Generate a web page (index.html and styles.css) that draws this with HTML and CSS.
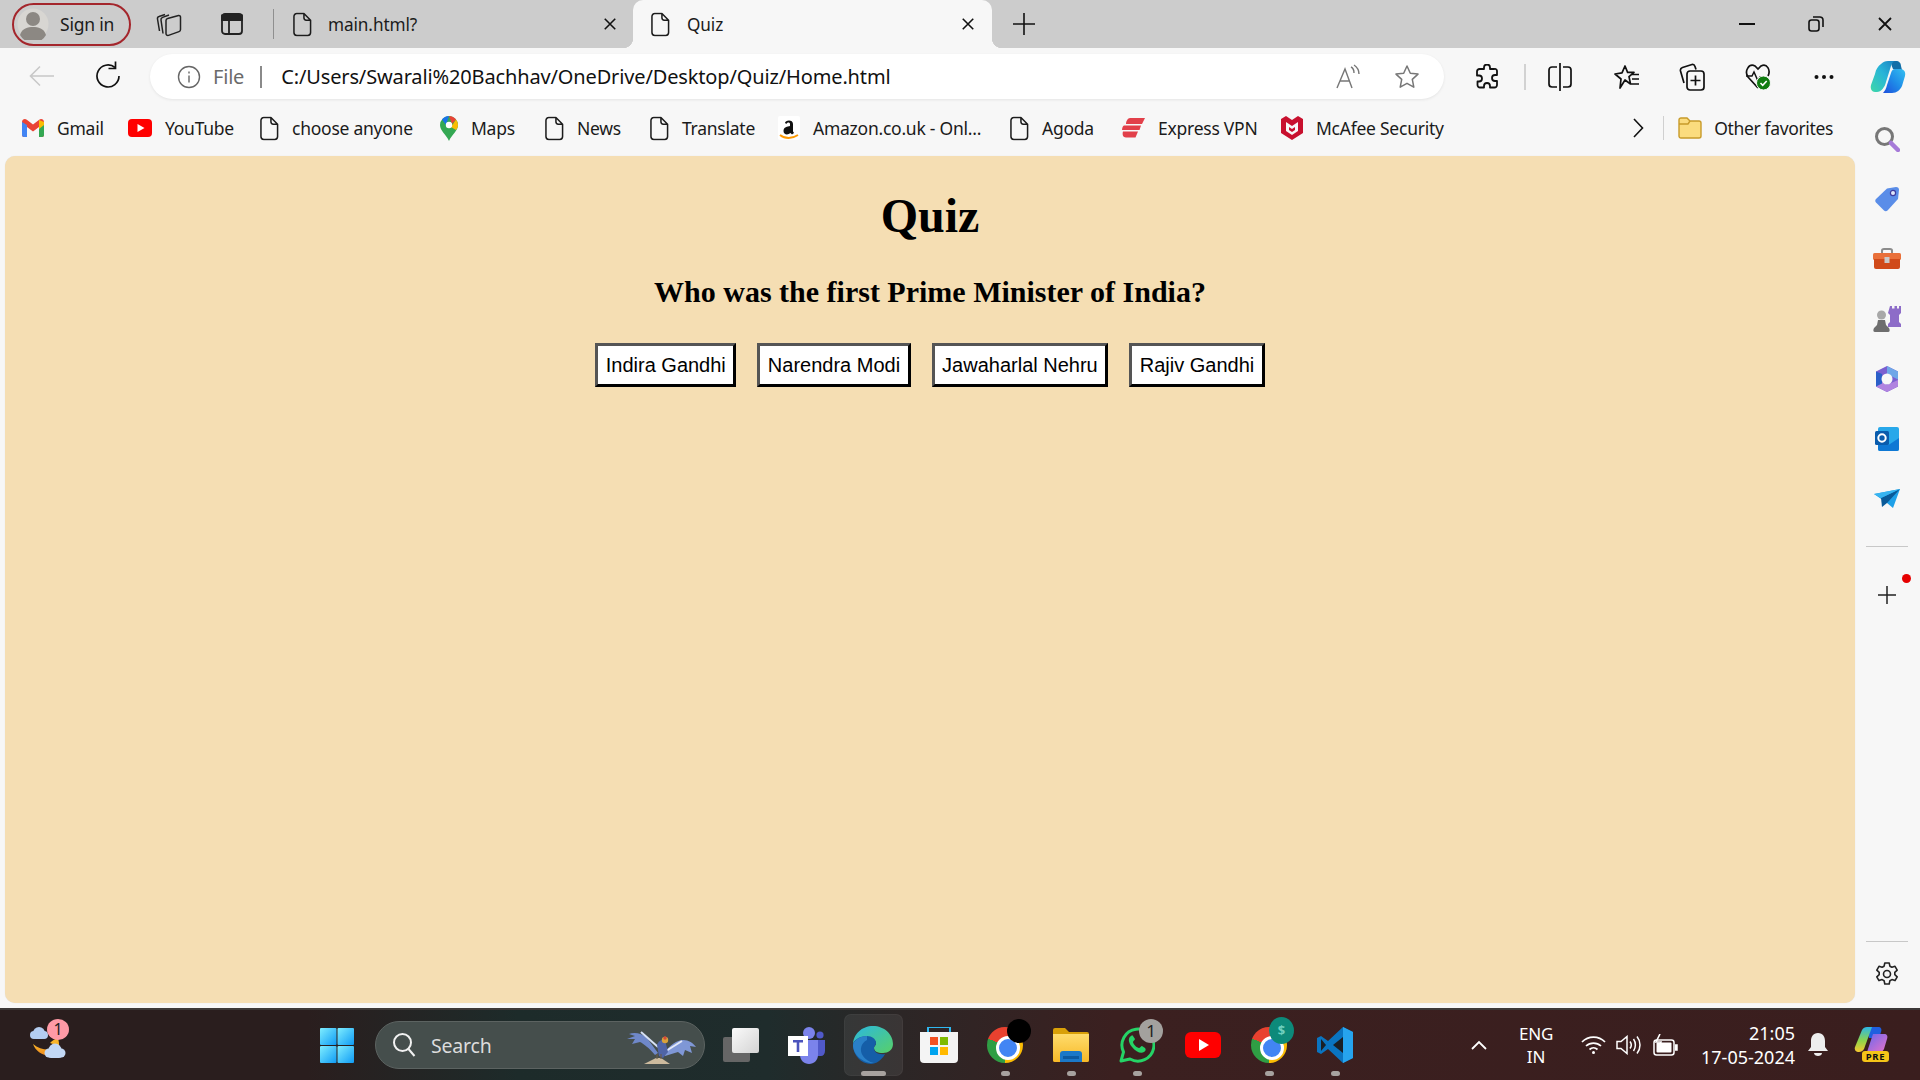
FILE: index.html
```html
<!DOCTYPE html>
<html lang="en">
<head>
<meta charset="utf-8">
<title>Quiz</title>
<link rel="stylesheet" href="styles.css">
</head>
<body>
<svg class="sprites" aria-hidden="true">
  <defs>
    <symbol id="file" viewBox="0 0 20 26"><path d="M4 1.500h7.500L18.500 8.500v13a3 3 0 0 1-3 3H4a3 3 0 0 1-3-3v-17a3 3 0 0 1 3-3zM11.500 1.500V6a2.500 2.500 0 0 0 2.500 2.500h4.500" fill="none" stroke="#1c1c1c" stroke-width="1.600" stroke-linejoin="round"/></symbol>
    <symbol id="x" viewBox="0 0 16 16"><path d="M2 2l12 12M14 2L2 14" stroke="#111" stroke-width="1.800" fill="none"/></symbol>
    <linearGradient id="copL" x1="0" y1="1" x2="1" y2="0"><stop offset="0" stop-color="#3ed8a8"/><stop offset=".55" stop-color="#27b4d8"/><stop offset="1" stop-color="#1a7fc0"/></linearGradient>
    <linearGradient id="copR" x1="0" y1="1" x2="1" y2="0"><stop offset="0" stop-color="#1f4fdc"/><stop offset=".5" stop-color="#1f8ce8"/><stop offset="1" stop-color="#35c0f0"/></linearGradient>
    <linearGradient id="edge" x1="0" y1="0" x2="1" y2="1"><stop offset="0" stop-color="#2bb8e0"/><stop offset="1" stop-color="#58d068"/></linearGradient>
    <linearGradient id="win" x1="0" y1="0" x2="1" y2="1"><stop offset="0" stop-color="#7feeff"/><stop offset="1" stop-color="#0f9bf5"/></linearGradient>
    <linearGradient id="folder" x1="0" y1="0" x2="0" y2="1"><stop offset="0" stop-color="#ffdc6c"/><stop offset="1" stop-color="#f7b928"/></linearGradient>
    <linearGradient id="preL" x1="0" y1="0" x2="0" y2="1"><stop offset="0" stop-color="#2bb7e8"/><stop offset=".55" stop-color="#8fd44a"/><stop offset="1" stop-color="#f8c830"/></linearGradient>
    <linearGradient id="preR" x1="0" y1="0" x2="1" y2="1"><stop offset="0" stop-color="#6a68ee"/><stop offset="1" stop-color="#e872c8"/></linearGradient>
    <linearGradient id="card" x1="0" y1="0" x2="1" y2="1"><stop offset="0" stop-color="#fafafa"/><stop offset="1" stop-color="#d4d4d4"/></linearGradient>
    <linearGradient id="moon" x1="0" y1="0" x2="0" y2="1"><stop offset="0" stop-color="#f8b52a"/><stop offset="1" stop-color="#ee8a1e"/></linearGradient>
  </defs>
</svg>

<div class="browser">
  <header class="tabstrip">
    <div class="signin">
      <svg class="avatar" viewBox="0 0 32 32"><circle cx="16" cy="16" r="15.500" fill="#d8d6d2"/><circle cx="16" cy="11" r="7" fill="#8c8883"/><path d="M3 27c2-7 8-8 13-8s11 1 13 8a15 15 0 0 1-26 0z" fill="#8c8883"/></svg>
      <span>Sign in</span>
    </div>
    <span class="strip-btn first">
      <svg width="26" height="26" viewBox="0 0 26 26" fill="none" stroke="#222" stroke-width="1.500" stroke-linejoin="round"><path d="M3.500 20L1.500 8c-.2-1.200.4-2.200 1.500-2.500L9 3.500M7 22.500L5 9c-.2-1.200.5-2.200 1.600-2.600L13 4M10 21.500V9.500c0-1 .6-1.800 1.600-2l11-3c1-.2 1.900.5 1.900 1.500v12.500c0 1-.6 1.800-1.500 2.100l-10.500 3.800c-1.300.4-2.500-.4-2.500-1.900z"/></svg>
    </span>
    <span class="strip-btn">
      <svg width="24" height="24" viewBox="0 0 24 24" fill="none" stroke="#222" stroke-width="1.800"><rect x="2" y="2" width="20" height="20" rx="3"/><path d="M2 3.500h20V8H2zM9 8v14" fill="#222"/></svg>
    </span>
    <i class="strip-sep"></i>
    <div class="tab">
      <svg class="ficon" viewBox="0 0 20 26"><use href="#file"/></svg>
      <span class="tab-label">main.html?</span>
      <svg class="tabx" viewBox="0 0 16 16"><use href="#x"/></svg>
    </div>
    <div class="tab active">
      <svg class="ficon" viewBox="0 0 20 26"><use href="#file"/></svg>
      <span class="tab-label">Quiz</span>
      <svg class="tabx" viewBox="0 0 16 16"><use href="#x"/></svg>
    </div>
    <svg class="newtab" width="22" height="22" viewBox="0 0 22 22"><path d="M11 0v22M0 11h22" stroke="#111" stroke-width="1.600"/></svg>
    <div class="winctl">
      <svg width="16" height="16" viewBox="0 0 16 16"><path d="M0 8h16" stroke="#111" stroke-width="2"/></svg>
      <svg width="16" height="16" viewBox="0 0 16 16" fill="none" stroke="#111" stroke-width="1.600"><rect x="1" y="4" width="10" height="11" rx="2.500"/><path d="M5 1h6.500A3 3 0 0 1 15 4v7"/></svg>
      <svg width="16" height="16" viewBox="0 0 16 16"><use href="#x"/></svg>
    </div>
  </header>

  <nav class="toolbar">
    <svg class="tool-back" width="26" height="22" viewBox="0 0 26 22" fill="none" stroke="#c8c8c8" stroke-width="1.600"><path d="M25 11H2M11 1.500L1.500 11l9.500 9.500"/></svg>
    <svg class="tool-reload" width="26" height="28" viewBox="0 0 26 28" fill="none" stroke="#111" stroke-width="1.700"><path d="M20 6.500A11 11 0 1 0 24 15"/><path d="M20.500 0.500v7h-7"/></svg>
    <div class="address">
      <svg width="24" height="24" viewBox="0 0 24 24" fill="none" stroke="#666" stroke-width="1.400"><circle cx="12" cy="12" r="10.500"/><path d="M12 10.500v7M12 6.500v2"/></svg>
      <span class="scheme">File</span>
      <i class="addr-sep"></i>
      <span class="url">C:/Users/Swarali%20Bachhav/OneDrive/Desktop/Quiz/Home.html</span>
      <svg class="readaloud" width="26" height="26" viewBox="0 0 26 26" fill="none" stroke="#777" stroke-width="1.400"><path d="M1 24L9 5l7 19M4 17h10M15 3c2 1 3 3 3 6M18 1c3 2 5 5 5 9"/></svg>
      <svg width="26" height="26" viewBox="0 0 26 26" fill="none" stroke="#777" stroke-width="1.500" stroke-linejoin="round"><path d="M13 2l3.300 7.200 7.700.9-5.700 5.300 1.500 7.800L13 19.300l-6.800 3.900 1.500-7.800L2 10.100l7.700-.9z"/></svg>
    </div>
    <div class="tools">
      <svg class="t1" width="24" height="26" viewBox="0 0 24 26" fill="none" stroke="#111" stroke-width="1.800" stroke-linejoin="round"><path d="M9 3.500a3 3 0 0 1 6 0V5h4.500A2 2 0 0 1 22 7v4h-2a3 3 0 0 0 0 6h2v4a2.500 2.500 0 0 1-2.500 2.500H15v-1.500a3 3 0 0 0-6 0v1.500H5A2.500 2.500 0 0 1 2.500 21v-3.500H4a3 3 0 0 0 0-6H2V7.500A2.500 2.500 0 0 1 4.500 5H9z"/></svg>
      <i class="tool-sep"></i>
      <svg class="t2" width="24" height="28" viewBox="0 0 24 28" fill="none" stroke="#111" stroke-width="1.700"><path d="M9 4H4a3 3 0 0 0-3 3v14a3 3 0 0 0 3 3h5M15 4h5a3 3 0 0 1 3 3v14a3 3 0 0 1-3 3h-5M12 0v28"/></svg>
      <svg class="t3" width="26" height="26" viewBox="0 0 26 26" fill="none" stroke="#111" stroke-width="1.700" stroke-linejoin="round"><path d="M11 2l2.600 6.400H20l-5 4.200L16.500 20 11 16l-5 8 1-9-6-5 7-1.200zM18 10.500h7M18 15h7M17 20h8"/></svg>
      <svg class="t4" width="26" height="28" viewBox="0 0 26 28" fill="none" stroke="#111" stroke-width="1.700" stroke-linejoin="round"><path d="M5 20L1.500 8c-.3-1.500.5-3 2-3.500L13 1.500c1.500-.3 2.500.5 3 2l1 3"/><rect x="8" y="8" width="17" height="19" rx="3"/><path d="M16.500 12.500v10M11.500 17.500h10"/></svg>
      <svg class="t5" width="26" height="28" viewBox="0 0 26 28"><path d="M13 25L3 14C-1 8 4 0 10 3l3 3 3-3c6-3 10 4 7 10" fill="none" stroke="#111" stroke-width="1.700"/><path d="M1 13h6l2-4 4 9 2-4h3" fill="none" stroke="#111" stroke-width="1.500"/><circle cx="18.500" cy="20" r="7" fill="#107c10" stroke="#f7f7f7"/><path d="M15.500 20l2.200 2.300 4-4.300" fill="none" stroke="#fff" stroke-width="1.600"/></svg>
      <svg class="t6" width="20" height="6" viewBox="0 0 20 6" fill="#111"><circle cx="2.500" cy="3" r="2"/><circle cx="10" cy="3" r="2"/><circle cx="17.500" cy="3" r="2"/></svg>
      <svg class="t7" width="36" height="32" viewBox="0 0 36 32"><path d="M22 0h4c3 0 5 2 5 5l1 4-9-1c-2-4-2-6-1-8z" fill="#136fa8"/><path d="M11 3c2-2 4-3 7-3h8c-3 0-4 2-5 5l-5 16c-1 5-5 10-9 10H5c-3 0-5-3-4-7l4-11c1-5 3-8 6-10z" fill="url(#copL)"/><path d="M13 32h9c5 0 8-3 10-7l3-10c1-4-1-7-5-7h-5c-2 0-3 1-4 4l-4 12c-.7 3-2 6-4 8z" fill="url(#copR)"/></svg>
    </div>
  </nav>

  <div class="main">
    <div class="pagecol">
      <div class="favbar">
        <ul class="favlist">
          <li class="fav">
            <svg class="favico" width="22" height="18" viewBox="0 0 22 18"><path d="M0 3v13a2 2 0 0 0 2 2h3V8l6 4.500L17 8v10h3a2 2 0 0 0 2-2V3c0-2.500-2.800-3.800-4.800-2.300L11 5.500 4.800.7C2.800-.8 0 .5 0 3z" fill="#ea4335"/><path d="M0 3v13a2 2 0 0 0 2 2h3V6z" fill="#4285f4"/><path d="M22 3v13a2 2 0 0 1-2 2h-3V6z" fill="#34a853"/><path d="M17 1l5 2v3l-5 4z" fill="#fbbc04"/></svg>
            <span>Gmail</span>
          </li>
          <li class="fav">
            <svg class="favico" width="24" height="18" viewBox="0 0 24 18"><rect width="24" height="18" rx="4" fill="#f00"/><path d="M9.500 5l7 4-7 4z" fill="#fff"/></svg>
            <span>YouTube</span>
          </li>
          <li class="fav"><svg class="favico ficon" viewBox="0 0 20 26"><use href="#file"/></svg><span>choose anyone</span></li>
          <li class="fav">
            <svg class="favico" width="18" height="25" viewBox="0 0 18 25"><path d="M9 0a9 9 0 0 1 9 9c0 6-6 9-9 16-3-7-9-10-9-16a9 9 0 0 1 9-9z" fill="#34a853"/><path d="M2 3.500A9 9 0 0 1 9 0l-3 9z" fill="#1a73e8"/><path d="M9 0a9 9 0 0 1 7 3.500L12 8z" fill="#ea4335"/><path d="M16 3.500A9 9 0 0 1 18 9c0 2-1 4-2 5l-5-3z" fill="#fbbc04"/><circle cx="9" cy="9" r="3.200" fill="#fff"/></svg>
            <span>Maps</span>
          </li>
          <li class="fav"><svg class="favico ficon" viewBox="0 0 20 26"><use href="#file"/></svg><span>News</span></li>
          <li class="fav"><svg class="favico ficon" viewBox="0 0 20 26"><use href="#file"/></svg><span>Translate</span></li>
          <li class="fav">
            <svg class="favico" width="22" height="24" viewBox="0 0 22 24"><rect width="22" height="24" rx="2" fill="#fff"/><path d="M7 7c0-3 8-4 8 1v7c0 1 1 1.500 1 2l-2 1.500-1.500-1.500c-3 2.500-7 1.500-7-2 0-4 4-4.500 6.500-5V8c0-2-3-2-3.500 0z" fill="#111"/><path d="M2 19c5 4 12 4 18 0" stroke="#f90" stroke-width="1.800" fill="none"/></svg>
            <span>Amazon.co.uk - Onl...</span>
          </li>
          <li class="fav"><svg class="favico ficon" viewBox="0 0 20 26"><use href="#file"/></svg><span>Agoda</span></li>
          <li class="fav">
            <svg class="favico" width="24" height="20" viewBox="0 0 24 20" fill="#e2404a"><path d="M9 0h15l-3 6H5c0-3 2-6 4-6zM3 7.500h17l-1.500 4.500H1c0-2 1-4.500 2-4.500zM2 13.500h15l-2.500 6H5c-3 0-4-3-3-6z"/></svg>
            <span>Express VPN</span>
          </li>
          <li class="fav">
            <svg class="favico" width="22" height="24" viewBox="0 0 22 24"><path d="M0 3l5-3 6 4 6-4 5 3v14l-11 7L0 17z" fill="#c8102e"/><path d="M5 6l6 4 6-4v9l-6 4-6-4z" fill="#f7f7f7"/><path d="M8 11l3 2 3-2v3l-3 2-3-2z" fill="#c8102e"/></svg>
            <span>McAfee Security</span>
          </li>
        </ul>
        <svg class="fav-more" width="12" height="20" viewBox="0 0 12 20" fill="none" stroke="#111" stroke-width="1.600"><path d="M2 1l8.500 9L2 19"/></svg>
        <i class="fav-sep"></i>
        <div class="fav other">
          <svg class="favico" width="24" height="22" viewBox="0 0 24 22"><path d="M1 3a2 2 0 0 1 2-2h6l3 3h9a2 2 0 0 1 2 2v13a2 2 0 0 1-2 2H3a2 2 0 0 1-2-2z" fill="#fbdc7e" stroke="#c89b2a" stroke-width="1.400"/><path d="M1 7h9l2-3" fill="none" stroke="#c89b2a" stroke-width="1.400"/></svg>
          <span>Other favorites</span>
        </div>
      </div>

      <main class="page">
        <h1>Quiz</h1>
        <h2>Who was the first Prime Minister of India?</h2>
        <div class="options">
          <button type="button">Indira Gandhi</button>
          <button type="button">Narendra Modi</button>
          <button type="button">Jawaharlal Nehru</button>
          <button type="button">Rajiv Gandhi</button>
        </div>
      </main>
    </div>

    <aside class="sidebar">
      <div class="side-slot">
        <svg width="26" height="26" viewBox="0 0 26 26"><circle cx="10.500" cy="10.500" r="8" fill="none" stroke="#777" stroke-width="3"/><path d="M17 17l7 7" stroke="#a67ad8" stroke-width="4.500" stroke-linecap="round"/></svg>
      </div>
      <div class="side-slot">
        <svg width="26" height="26" viewBox="0 0 26 26"><path d="M13 2.500l9-1.500c2 0 3 1 3 3l-1 9-10.500 11.500c-1 1-2.500 1-3.500 0L2 16.500c-1-1-1-2.500 0-3.500z" fill="#5a8de8"/><circle cx="19" cy="7" r="2.600" fill="#dfe6fa" stroke="#3c3ca0" stroke-width="1.200"/></svg>
      </div>
      <div class="side-slot">
        <svg width="28" height="22" viewBox="0 0 28 22"><path d="M9 5V2.500C9 1.500 10 1 11 1h6c1 0 2 .5 2 1.500V5" fill="none" stroke="#8c8c8c" stroke-width="2"/><rect y="5" width="28" height="7" rx="1.500" fill="#e9703a"/><path d="M1 11h26v8a2 2 0 0 1-2 2H3a2 2 0 0 1-2-2z" fill="#d04a1a"/><rect x="11.500" y="9" width="5" height="6" fill="#c9c9c9"/></svg>
      </div>
      <div class="side-slot">
        <svg width="28" height="28" viewBox="0 0 28 28"><path d="M17 1h2v2.500h2.500V1H24v2.500h2V1h2v7l-2 2v7l2 2v3H15v-3l2-2v-7l-2-2z" fill="#8d6cc8"/><circle cx="8.500" cy="10" r="4.500" fill="#a8a8a8"/><path d="M5 15h7l1 5 3 3c1 2 1 4-1 4H2c-2 0-2-2-1-4l3-3z" fill="#6e6e6e"/></svg>
      </div>
      <div class="side-slot">
        <svg width="26" height="26" viewBox="0 0 26 26"><path d="M13 0l11 5.500v15L13 26 2 20.500v-15z" fill="#7a5fd0"/><path d="M13 0l11 5.500v8L13 8z" fill="#6fa7e8"/><path d="M2 12l11 7 11-5v6.500L13 26 2 20.500z" fill="#b083e0"/><path d="M2 5.500v15l6-3V8z" fill="#2a5fc8"/><circle cx="13" cy="13" r="5.500" fill="#f7f7f7"/></svg>
      </div>
      <div class="side-slot">
        <svg width="24" height="24" viewBox="0 0 24 24"><rect x="3" width="21" height="24" rx="2" fill="#28a8ea"/><path d="M3 13l10.500 5L24 11v11a2 2 0 0 1-2 2H5a2 2 0 0 1-2-2z" fill="#0f78d4"/><rect y="4" width="14" height="14" rx="1.500" fill="#0a5cad"/><circle cx="7" cy="11" r="3.700" fill="none" stroke="#fff" stroke-width="2"/></svg>
      </div>
      <div class="side-slot">
        <svg width="26" height="20" viewBox="0 0 26 20"><path d="M0 5l26-5-7 19-6-5z" fill="#1ea0e8"/><path d="M26 0L7 9l1 9 5-4z" fill="#0a5a98"/><path d="M26 0L7 9 0 5z" fill="#37b4f0"/></svg>
      </div>
      <i class="side-sep"></i>
      <div class="side-add">
        <svg width="18" height="18" viewBox="0 0 18 18"><path d="M9 0v18M0 9h18" stroke="#222" stroke-width="1.500"/></svg>
        <i class="reddot"></i>
      </div>
      <div class="side-bottom">
        <svg width="26" height="26" viewBox="0 0 26 26" fill="none" stroke="#222" stroke-width="1.600" stroke-linejoin="round"><path d="M10.800 2h4.400l.7 3.200 2 1.100 3.100-1 2.200 3.800-2.400 2.200v2.300l2.400 2.200-2.200 3.800-3.100-1-2 1.100-.7 3.300h-4.400l-.7-3.300-2-1.100-3.100 1-2.200-3.800 2.400-2.200v-2.300L2.800 9.100 5 5.300l3.100 1 2-1.100z"/><circle cx="13" cy="13" r="3.500"/></svg>
      </div>
    </aside>
  </div>
</div>

<footer class="taskbar">
  <div class="weather">
    <svg width="38" height="40" viewBox="0 0 38 40"><path d="M3 23c3 8 11 13 19 11 3-1 6-4 7-9-6 5-18 5-26-2z" fill="url(#moon)"/><path d="M20 22c3-3 6-5 8-4 1 2 1 4 1 7z" fill="#f8b52a"/><g fill="#b4cdf0"><circle cx="9" cy="12" r="6"/><circle cx="4" cy="14" r="4"/><circle cx="14" cy="14" r="4"/><rect x="3" y="12" width="12" height="6" rx="3"/></g><g fill="#c2d8f5"><circle cx="25" cy="29" r="6.500"/><circle cx="19" cy="32" r="4.500"/><circle cx="31" cy="32" r="4.500"/><rect x="18" y="30" width="14" height="7" rx="3"/></g></svg>
    <b class="wx-badge">1</b>
  </div>
  <div class="task-center">
    <div class="slot winlogo">
      <svg width="34" height="35" viewBox="0 0 34 35" fill="url(#win)"><rect width="16.500" height="17" rx="1"/><rect x="17.500" width="16.500" height="17" rx="1"/><rect y="18" width="16.500" height="17" rx="1"/><rect x="17.500" y="18" width="16.500" height="17" rx="1"/></svg>
    </div>
    <div class="search">
      <svg width="24" height="26" viewBox="0 0 24 26" fill="none" stroke="#f2f2f2" stroke-width="2"><circle cx="10.500" cy="10.500" r="8.500"/><path d="M16.500 17l6 7"/></svg>
      <span>Search</span>
      <svg class="condor" width="72" height="38" viewBox="0 0 72 38"><path d="M31 27L20 12C15 7 7 6 2 8l6 2-8 3 8 0-3 5 8-2c4 2 9 6 15 13z" fill="#6f88c9"/><path d="M14 6l17 15" stroke="#d7e1f5" stroke-width="2" fill="none"/><path d="M38 26c5-7 12-12 18-12 6 0 10 3 13 7l-6-1 2 7-7-3-2 6-5-4-13 4z" fill="#7f97d6"/><path d="M39 25l16-10" stroke="#e3e9f8" stroke-width="2" fill="none"/><path d="M30 19c1-4 5-6 8-5l3 12-5 6-4-2z" fill="#4f64a6"/><circle cx="38" cy="14" r="3.200" fill="#d9a23a"/><circle cx="38" cy="12" r="1.700" fill="#d64a3a"/><path d="M17 38l8-4 4-2h5l9 6z" fill="#cdbb9e"/><path d="M30 28v5M34 28v5" stroke="#6a5c4c" stroke-width="1.200"/></svg>
    </div>
    <div class="slot">
      <svg width="36" height="34" viewBox="0 0 36 34"><rect y="9" width="27" height="25" rx="2" fill="#666"/><rect x="9" width="27" height="25" rx="2" fill="url(#card)"/></svg>
    </div>
    <div class="slot">
      <svg width="38" height="38" viewBox="0 0 38 38"><circle cx="21" cy="7" r="6" fill="#7b83eb"/><circle cx="32" cy="9" r="3.600" fill="#5059c9"/><path d="M27 14h10v11c0 3-2 5-4 5h-6z" fill="#5059c9"/><path d="M12 14h18v15c0 5-4 9-9 9s-9-4-9-9z" fill="#7b83eb"/><rect y="10" width="20" height="20" fill="#fff"/><path d="M5 14h10v2.400h-3.700V26H8.700v-9.600H5z" fill="#4b53bc"/></svg>
    </div>
    <div class="slot current">
      <svg width="40" height="38" viewBox="0 0 40 38"><path d="M0 19C0 8 9 0 20 0c11 0 20 8 20 18 0 6-5 9-10 9-6 0-9-2-9-5 0-2 2-2 2-5s-4-5-8-5C7 12 0 14 0 19z" fill="url(#edge)"/><path d="M0 19c0-5 7-9 14-9 5 0 9 3 9 7 0 2-2 3-2 5 0 4 4 7 11 6-3 6-9 10-14 10C8 38 0 29 0 19z" fill="#155ea8"/><path d="M14 14c-6 3-8 10-4 16 2 3 6 6 11 7C12 38 0 30 0 19c0-4 7-9 14-9z" fill="#2a80c8"/></svg>
      <i class="run wide"></i>
    </div>
    <div class="slot">
      <svg width="38" height="36" viewBox="0 0 38 36"><rect x="8" y="0" width="22" height="9" fill="none" stroke="#30b8f0" stroke-width="2"/><path d="M0 5h38v27a4 4 0 0 1-4 4H4a4 4 0 0 1-4-4z" fill="#f4f4f4"/><rect x="10" y="10" width="8" height="8" fill="#f25022"/><rect x="20" y="10" width="8" height="8" fill="#7fba00"/><rect x="10" y="20" width="8" height="8" fill="#00a4ef"/><rect x="20" y="20" width="8" height="8" fill="#ffb900"/></svg>
    </div>
    <div class="slot">
      <div class="chrome"></div>
      <i class="blackdot"></i>
      <i class="run"></i>
    </div>
    <div class="slot">
      <svg width="36" height="34" viewBox="0 0 36 34"><path d="M0 2a2 2 0 0 1 2-2h10l4 4h18a2 2 0 0 1 2 2v26a2 2 0 0 1-2 2H2a2 2 0 0 1-2-2z" fill="#d9a008"/><path d="M0 6h36v26a2 2 0 0 1-2 2H2a2 2 0 0 1-2-2z" fill="url(#folder)"/><path d="M7 34V26a3 3 0 0 1 3-3h16a3 3 0 0 1 3 3v8z" fill="#1b78c8"/><rect x="10" y="28" width="16" height="3" fill="#0d5aa0"/></svg>
      <i class="run"></i>
    </div>
    <div class="slot">
      <svg width="36" height="36" viewBox="0 0 36 36"><path d="M2 34l2.500-9A16 16 0 1 1 11 32z" fill="none" stroke="#25d366" stroke-width="3" stroke-linejoin="round"/><path d="M12 9c-3 2-3 6 1 11s9 7 12 5c2-1 2-3 1-4l-3-2c-1 0-2 2-3 2-2 0-6-4-6-6 0-1 2-2 2-3l-2-3c-.5-1-1-1-2 0z" fill="#25d366"/></svg>
      <b class="gray-badge">1</b>
      <i class="run"></i>
    </div>
    <div class="slot">
      <svg width="36" height="26" viewBox="0 0 36 26"><rect width="36" height="26" rx="6" fill="#f00"/><path d="M14 7l10 6-10 6z" fill="#fff"/></svg>
    </div>
    <div class="slot">
      <div class="chrome"></div>
      <b class="green-badge">$</b>
      <i class="run"></i>
    </div>
    <div class="slot">
      <svg width="36" height="36" viewBox="0 0 36 36"><path d="M26 0l10 5v26l-10 5-15-14-7 5-4-2v-14l4-2 7 5z" fill="#0a74c0"/><path d="M26 0l10 5v26l-10 5z" fill="#26a4ee"/><path d="M26 10v16l-10-8z" fill="#1a1f24"/><path d="M4 12l5 6-5 6z" fill="#1a1f24"/></svg>
      <i class="run"></i>
    </div>
  </div>
  <div class="tray">
    <svg class="tr-up" width="16" height="10" viewBox="0 0 16 10" fill="none" stroke="#fff" stroke-width="1.800"><path d="M1 9l7-7 7 7"/></svg>
    <div class="lang"><span>ENG</span><span>IN</span></div>
    <svg class="tr-wifi" width="25" height="18" viewBox="0 0 25 18" fill="none" stroke="#fff" stroke-width="1.700"><path d="M1 6a16 16 0 0 1 23 0M5 10a11 11 0 0 1 15 0M8.500 13.500a6 6 0 0 1 8 0"/><circle cx="12.500" cy="16.500" r="1.500" fill="#fff" stroke="none"/></svg>
    <svg class="tr-vol" width="25" height="20" viewBox="0 0 25 20" fill="none" stroke="#fff" stroke-width="1.500"><path d="M1 6.500h4L11 1.500v17l-6-5H1zM14 6.500c1.500 2 1.500 5 0 7M17.500 4c2.500 3.500 2.500 8.500 0 12M21 1.500c4 5 4 12 0 17"/></svg>
    <svg class="tr-bat" width="25" height="22" viewBox="0 0 25 22" fill="none" stroke="#fff" stroke-width="1.500"><rect x="1" y="6" width="20" height="15" rx="2.500"/><rect x="3.500" y="8.500" width="15" height="10" rx="1" fill="#fff" stroke="none"/><path d="M22 11h2v5h-2" fill="#fff"/><path d="M7 0L3 8h5l-2 6" stroke-width="1.600"/></svg>
    <div class="clock"><span>21:05</span><span>17-05-2024</span></div>
    <svg class="tr-bell" width="20" height="24" viewBox="0 0 20 24" fill="#eee"><path d="M10 0c5 0 7 4 7 8v6l3 4H0l3-4V8c0-4 2-8 7-8z"/><path d="M6 20h8c0 2-2 3-4 3s-4-1-4-3z"/></svg>
    <div class="precop">
      <svg width="34" height="26" viewBox="0 0 34 26"><path d="M13 0h11c3 0 4 2 3 5l-2 6H15z" fill="#1f5fe0"/><path d="M8 3c1-2 3-3 5-3h5L10 22c-1 2-3 3-5 3-3 0-5-2-4-5z" fill="url(#preL)"/><path d="M19 7h11c3 0 4 2 3 5l-3 10c-1 2-2 3-4 3H13z" fill="url(#preR)"/></svg>
      <b>PRE</b>
    </div>
  </div>
</footer>
</body>
</html>
```

FILE: styles.css
```css
* { box-sizing: border-box; }
html, body { margin: 0; padding: 0; }
body {
  width: 1920px;
  height: 1080px;
  overflow: hidden;
  display: flex;
  flex-direction: column;
  font-family: "Noto Sans", "Liberation Sans", sans-serif;
  color: #1b1b1b;
  background: #f7f7f7;
}
i { display: block; }
svg { display: block; flex: none; }
.sprites { position: absolute; width: 0; height: 0; }

.browser { height: 1008px; display: flex; flex-direction: column; }

/* Tab strip */
.tabstrip { height: 48px; background: #cccccc; display: flex; align-items: center; flex: none; padding-left: 12px; }
.signin {
  width: 119px; height: 43px; border: 2px solid #a4262c; border-radius: 22px;
  display: flex; align-items: center; gap: 11px; padding-left: 3px;
  font-size: 17.500px; letter-spacing: -0.2px;
}
.avatar { width: 32px; height: 32px; }
.strip-btn { width: 26px; display: flex; justify-content: center; }
.strip-btn.first { margin-left: 25px; margin-right: 37px; }
.strip-sep { width: 1px; height: 30px; background: #8f8f8f; margin-left: 28px; margin-right: 6px; }
.tab { width: 353px; height: 48px; display: flex; align-items: center; padding-left: 13px; position: relative; font-size: 17.200px; letter-spacing: -0.1px; }
.tab.active {
  width: 359px; background: #f7f7f7; border-radius: 10px 10px 0 0; padding-left: 18px;
}
.tab.active::before, .tab.active::after {
  content: ""; position: absolute; bottom: 0; width: 10px; height: 10px;
}
.tab.active::before { left: -10px; background: radial-gradient(circle at 0 0, transparent 10px, #f7f7f7 10.500px); }
.tab.active::after { right: -10px; background: radial-gradient(circle at 100% 0, transparent 10px, #f7f7f7 10.500px); }
.ficon { width: 19px; height: 25px; }
.tab-label { flex: 1; margin-left: 16px; }
.tab.active .tab-label { margin-left: 17px; }
.tab .tabx { width: 14px; height: 14px; margin-right: 16px; }
.tab.active .tabx { margin-right: 17px; }
.newtab { margin-left: 21px; }
.winctl { margin-left: auto; display: flex; gap: 53px; padding-right: 27px; }

/* Toolbar */
.toolbar { height: 54px; display: flex; align-items: flex-start; padding-top: 6px; flex: none; background: #f7f7f7; }
.tool-back { margin-left: 29px; margin-top: 11px; }
.tool-reload { margin-left: 40px; margin-top: 7px; }
.address {
  width: 1294px; height: 45px; margin-left: 29px; background: #fff; border-radius: 23px;
  display: flex; align-items: center; padding-left: 27px; padding-right: 24px;
  box-shadow: 0 1px 3px rgba(0,0,0,.08);
}
.scheme { margin-left: 12px; color: #6b6b6b; font-size: 20px; letter-spacing: -0.2px; }
.addr-sep { width: 2px; height: 22px; background: #8a8a8a; margin-left: 16px; margin-right: 19px; }
.url { flex: 1; font-size: 20px; letter-spacing: -0.14px; color: #111; white-space: nowrap; }
.readaloud { margin-right: 32px; }
.tools { flex: 1; display: flex; align-items: center; height: 45px; }
.t1 { margin-left: 31px; }
.tool-sep { width: 2px; height: 26px; background: #d2d2d2; margin-left: 25px; }
.t2 { margin-left: 22px; }
.t3 { margin-left: 42px; }
.t4 { margin-left: 39px; }
.t5 { margin-left: 40px; }
.t6 { margin-left: 43px; }
.t7 { margin-left: 36px; }

/* Main area */
.main { flex: 1; display: flex; min-height: 0; }
.pagecol { width: 1855px; display: flex; flex-direction: column; }

.favbar { height: 54px; display: flex; align-items: center; flex: none; padding: 0 22px 2px; font-size: 17.500px; }
.favlist {
  list-style: none; margin: 0; padding: 0; flex: none;
  display: grid; grid-template-columns: 106px 132px 180px 105px 105px 128px 232px 111px 160px 170px;
}
.fav { display: flex; align-items: center; white-space: nowrap; letter-spacing: -0.25px; }
.fav span { margin-left: 13px; }
.fav .ficon { width: 19px; height: 25px; }
.fav-more { margin-left: auto; }
.fav-sep { width: 1px; height: 24px; background: #d0d0d0; margin-left: 19px; margin-right: 14.500px; }
.fav.other { letter-spacing: -0.35px; }
.fav.other span { margin-left: 12px; }

.page {
  flex: 1; margin-left: 5px; background: #f5deb3; border-radius: 10px; margin-bottom: 5px;
  font-family: "Liberation Serif", serif; color: #000; text-align: center;
  box-shadow: 0 0 1px rgba(0,0,0,.12);
  padding-top: 32px;
}
.page h1 { font-size: 48px; line-height: 55px; margin: 0 0 31px; font-weight: 700; }
.page h2 { font-size: 30px; line-height: 35px; margin: 0 0 34px; font-weight: 700; }
.options { display: flex; justify-content: center; gap: 21px; }
.options button {
  font-family: "Liberation Sans", sans-serif; font-size: 20px; line-height: 23px; color: #000;
  background: #fff; padding: 7px 7.500px; height: 44px;
  border-width: 3px; border-style: solid; border-color: #555 #000 #000 #555;
}

/* Sidebar */
.sidebar { flex: 1; display: flex; flex-direction: column; align-items: center; padding: 7px 1px 3px 0; }
.side-slot { height: 60px; display: flex; align-items: center; justify-content: center; width: 100%; }
.side-sep { width: 42px; height: 1px; background: #c8c8c8; margin-top: 17px; }
.side-add { position: relative; height: 96px; width: 100%; display: flex; align-items: center; justify-content: center; }
.reddot { position: absolute; left: 47px; top: 27px; width: 9px; height: 9px; border-radius: 50%; background: #e60000; }
.side-bottom {
  margin-top: auto; width: 42px; height: 64px; border-top: 1px solid #c8c8c8;
  display: flex; align-items: center; justify-content: center;
}

/* Taskbar */
.taskbar {
  height: 72px; flex: none; position: relative; display: flex; align-items: center; color: #fff;
  border-top: 2px solid #3c3837;
  background: linear-gradient(90deg, #2a1e1e 0%, #2a1e1e 16%, #1d2b2a 27%, #1f2c2c 40%, #2c2626 47%, #3b2020 58%, #3a1e1e 100%);
}
.weather { position: relative; margin-left: 30px; width: 38px; height: 48px; }
.wx-badge {
  position: absolute; left: 17px; top: -2px; width: 22px; height: 21px; border-radius: 50%;
  background: #ff9aa6; color: #222; font: 400 16px/21px "Noto Sans", sans-serif; text-align: center;
}
.task-center { display: flex; align-items: center; margin-left: 236px; height: 70px; }
.slot { width: 66px; height: 70px; display: flex; align-items: center; justify-content: center; position: relative; }
.winlogo { margin-right: 5px; }
.search {
  width: 330px; height: 48px; border-radius: 24px; background: #454e4c; border: 1px solid #5c6361;
  display: flex; align-items: center; padding-left: 16px; margin-right: 3px; color: #dcdcdc; font-size: 19.500px; letter-spacing: -0.2px;
}
.search span { margin-left: 15px; flex: 1; }
.condor { margin-right: 5px; }
.current::before {
  content: ""; position: absolute; left: 4px; right: 3px; top: 4px; bottom: 4px;
  background: rgba(255,255,255,.07); border-radius: 7px; border: 1px solid rgba(255,255,255,.04);
}
.current svg { position: relative; }
.run { position: absolute; left: 29px; bottom: 4px; width: 9px; height: 5px; border-radius: 3px; background: #a7a29f; }
.run.wide { left: 21px; width: 25px; }
.chrome {
  width: 36px; height: 36px; border-radius: 50%; position: relative;
  background: conic-gradient(from 290deg, #e8412f 0 130deg, #fbbc04 130deg 250deg, #2f9e44 250deg 360deg);
}
.chrome::after {
  content: ""; position: absolute; left: 9px; top: 9px; width: 18px; height: 18px; border-radius: 50%;
  background: #4285f4; border: 3px solid #fff;
}
.blackdot { position: absolute; left: 35px; top: 9px; width: 24px; height: 24px; border-radius: 50%; background: #000; }
.gray-badge {
  position: absolute; left: 35px; top: 9px; width: 24px; height: 24px; border-radius: 50%;
  background: #a3a19e; color: #222; font: 400 17px/24px "Noto Sans", sans-serif; text-align: center;
}
.green-badge {
  position: absolute; left: 33px; top: 7px; width: 25px; height: 27px; border-radius: 50%;
  background: #0d8a7a; color: #6fd0bf; font: 700 13px/27px "Noto Sans", sans-serif; text-align: center;
}
.tray { position: absolute; left: 0; top: 0; width: 100%; height: 70px; display: flex; align-items: center; padding-left: 1471px; pointer-events: none; }
.lang { display: flex; flex-direction: column; align-items: center; width: 48px; margin-left: 25px; font-size: 17px; line-height: 23px; letter-spacing: -0.2px; }
.tr-wifi { margin-left: 21px; }
.tr-vol { margin-left: 10px; }
.tr-bat { margin-left: 12px; }
.clock { display: flex; flex-direction: column; align-items: flex-end; width: 111px; margin-left: 6px; font-size: 18px; line-height: 24px; }
.tr-bell { margin-left: 13px; }
.precop { position: relative; margin-left: 26px; width: 35px; height: 36px; }
.precop b {
  position: absolute; left: 8px; top: 24px; width: 27px; height: 11px; border-radius: 3px; background: #f5c518;
  color: #111; font: 700 9.500px/11px "Noto Sans", sans-serif; text-align: center; letter-spacing: .6px;
}
```
